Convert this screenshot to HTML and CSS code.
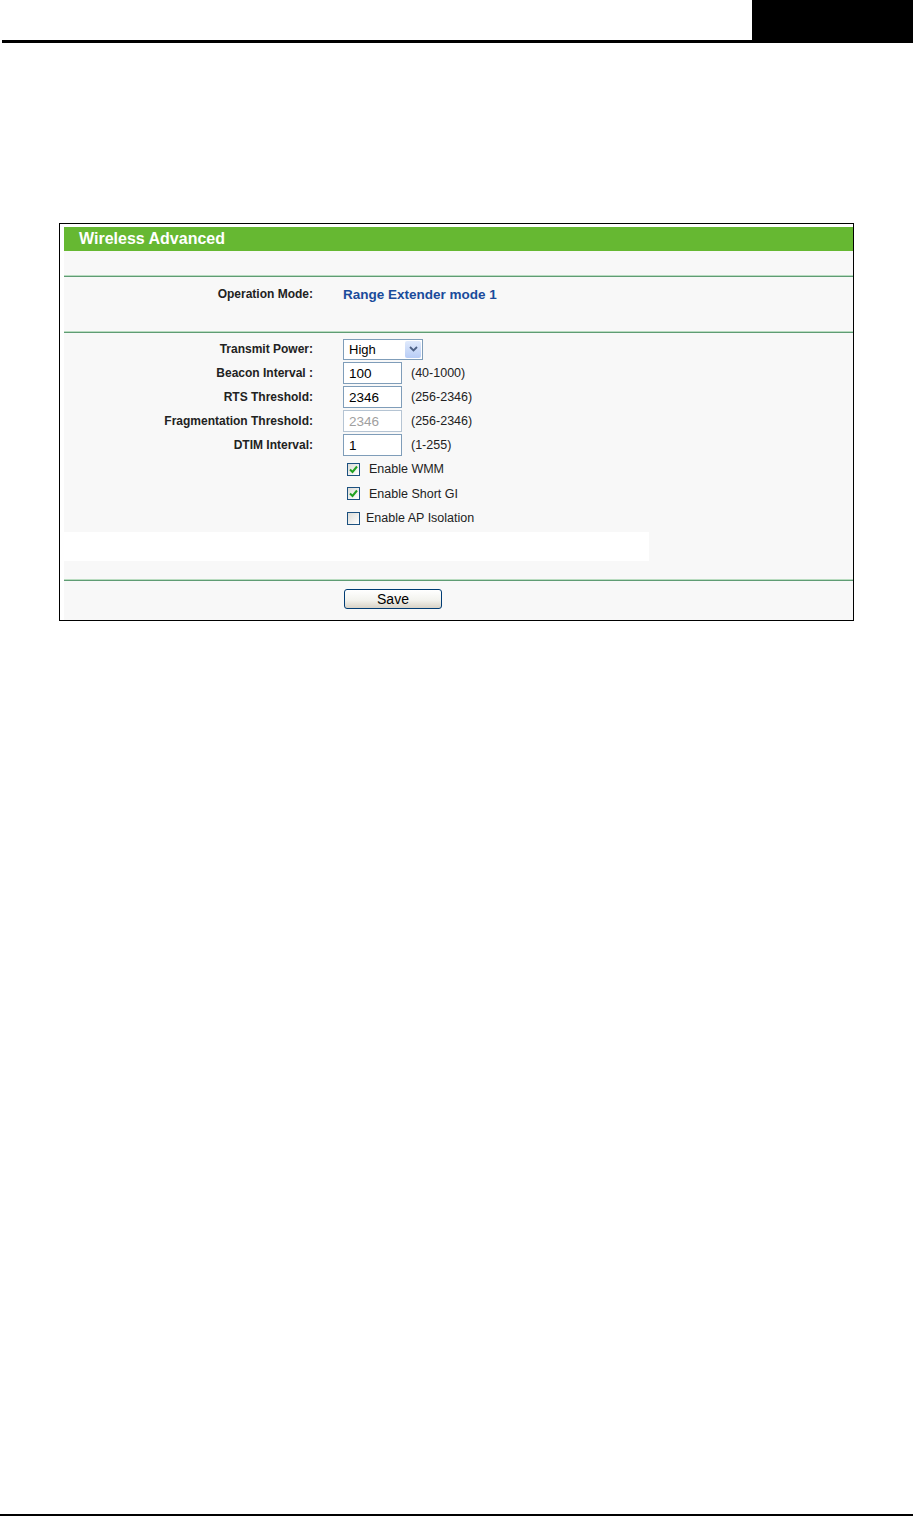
FILE: index.html
```html
<!DOCTYPE html>
<html lang="en">
<head>
    <meta charset="UTF-8">
    <title>Wireless Advanced</title>
    <link rel="stylesheet" href="styles.css">
</head>
<body>
    <div class="page">
        <!-- page header rule with the black tab on the right -->
        <div class="page-head">
            <div class="head-rule"></div>
            <div class="head-tab"></div>
        </div>

        <div class="figure">
            <div class="panel">
                <div class="panel-title">Wireless Advanced</div>
                <div class="blank"></div>
                <div class="sep"></div>

                <div class="mode-row">
                    <span class="label">Operation Mode:</span>
                    <span class="mode-value">Range Extender mode 1</span>
                </div>
                <div class="sep"></div>

                <div class="fields">
                    <div class="field">
                        <span class="label">Transmit Power:</span>
                        <div class="select-box">
                            <span class="select-text">High</span>
                            <span class="select-arrow">
                                <svg width="9" height="6" viewBox="0 0 9 6"><path d="M1 1 L4.5 4.5 L8 1" fill="none" stroke="#4d6185" stroke-width="1.8"/></svg>
                            </span>
                        </div>
                    </div>
                    <div class="field">
                        <span class="label">Beacon Interval :</span>
                        <input class="text-input" type="text" value="100">
                        <span class="hint">(40-1000)</span>
                    </div>
                    <div class="field">
                        <span class="label">RTS Threshold:</span>
                        <input class="text-input" type="text" value="2346">
                        <span class="hint">(256-2346)</span>
                    </div>
                    <div class="field">
                        <span class="label">Fragmentation Threshold:</span>
                        <input class="text-input" type="text" value="2346" disabled>
                        <span class="hint">(256-2346)</span>
                    </div>
                    <div class="field">
                        <span class="label">DTIM Interval:</span>
                        <input class="text-input" type="text" value="1">
                        <span class="hint">(1-255)</span>
                    </div>

                    <div class="check-row">
                        <span class="checkbox">
                            <svg width="11" height="11" viewBox="0 0 11 11"><path d="M2 5.5 L4.5 8 L9 2.5" fill="none" stroke="#21a121" stroke-width="2"/></svg>
                        </span>
                        <span class="check-label">Enable WMM</span>
                    </div>
                    <div class="check-row">
                        <span class="checkbox">
                            <svg width="11" height="11" viewBox="0 0 11 11"><path d="M2 5.5 L4.5 8 L9 2.5" fill="none" stroke="#21a121" stroke-width="2"/></svg>
                        </span>
                        <span class="check-label">Enable Short GI</span>
                    </div>
                    <div class="check-row">
                        <span class="checkbox"></span>
                        <span class="check-label tight">Enable AP Isolation</span>
                    </div>
                </div>

                <div class="note-box"></div>
                <div class="sep"></div>

                <div class="actions">
                    <button class="save-btn">Save</button>
                </div>
            </div>
        </div>

        <div class="page-foot"></div>
    </div>
</body>
</html>
```

FILE: styles.css
```css
body {
    margin: 0;
    font-family: "Liberation Sans", Arial, sans-serif;
    background: #fff;
    color: #222;
}

.page {
    height: 1517px;
    display: flex;
    flex-direction: column;
}

.page-head {
    display: flex;
    height: 43px;
}

.head-rule {
    flex: 1;
    margin-left: 2px;
    border-bottom: 3px solid #000;
}

.head-tab {
    width: 161px;
    background: #000;
}

.figure {
    margin: 180px 0 0 59px;
    width: 795px;
    box-sizing: border-box;
    border: 1px solid #000;
    padding: 3px 0 0 4px;
    background: #fff;
}

.panel {
    background: #f8f8f8;
}

.panel-title {
    height: 24px;
    line-height: 24px;
    background: #66b832;
    color: #fff;
    font-size: 16px;
    font-weight: bold;
    padding-left: 15px;
}

.blank {
    height: 24px;
}

.sep {
    height: 1px;
    background: #5f9c74;
    border-top: 1px solid #b9dcc0;
}

.mode-row {
    display: flex;
    height: 54px;
    box-sizing: border-box;
    padding-top: 10px;
    line-height: 15px;
}

.label {
    width: 249px;
    margin-right: 30px;
    flex-shrink: 0;
    text-align: right;
    font-size: 12px;
    font-weight: bold;
    color: #222;
}

.mode-value {
    font-size: 13.5px;
    font-weight: bold;
    color: #1a4b9b;
}

.fields {
    padding-top: 4px;
}

.field {
    display: flex;
    align-items: center;
    height: 24px;
}

.select-box {
    display: flex;
    align-items: center;
    justify-content: space-between;
    width: 80px;
    height: 21px;
    box-sizing: border-box;
    border: 1px solid #7f9db9;
    background: #fff;
}

.select-text {
    font-size: 13px;
    padding-left: 5px;
    color: #000;
}

.select-arrow {
    display: flex;
    align-items: center;
    justify-content: center;
    width: 16px;
    height: 17px;
    margin-right: 1px;
    border-radius: 2px;
    background: linear-gradient(#e0eafc, #b8cdf6);
}

.text-input {
    width: 59px;
    height: 22px;
    box-sizing: border-box;
    margin: 0;
    padding: 0 5px;
    border: 1px solid #7f9db9;
    background: #fff;
    font-family: inherit;
    font-size: 13.5px;
    color: #000;
}

.text-input:disabled {
    color: #a0a0a0;
    background: #fff;
    border-color: #b5c4d3;
}

.hint {
    margin-left: 9px;
    font-size: 12.5px;
    color: #222;
}

.check-row {
    display: flex;
    align-items: center;
    height: 24.5px;
    padding-left: 283px;
}

.checkbox {
    display: flex;
    align-items: center;
    justify-content: center;
    width: 13px;
    height: 13px;
    box-sizing: border-box;
    border: 1px solid #1c5180;
    background: linear-gradient(135deg, #dcdcd7, #fff);
}

.check-label {
    margin-left: 9px;
    font-size: 12.5px;
    color: #222;
}

.check-label.tight {
    margin-left: 6px;
}

.note-box {
    width: 585px;
    height: 29px;
    margin: 1px 0 18px;
    background: #fff;
}

.actions {
    padding: 8px 0 11px 280px;
}

.save-btn {
    display: block;
    width: 98px;
    height: 20px;
    padding: 0;
    border: 1px solid #003c74;
    border-radius: 3px;
    background: linear-gradient(#fff, #f3f3ee 55%, #d8d2c6);
    font-family: inherit;
    font-size: 14px;
    color: #000;
}

.page-foot {
    margin-top: auto;
    margin-bottom: 1px;
    height: 2px;
    background: #000;
}
```
